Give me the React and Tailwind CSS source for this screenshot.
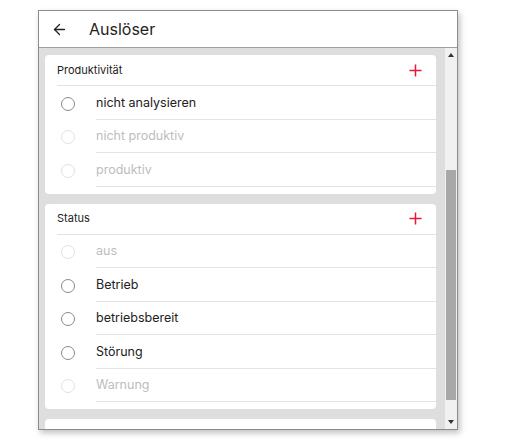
import { ArrowLeft } from "lucide-react";

const groups = [
    {
        title: "Produktivität",
        items: [
            { label: "nicht analysieren", enabled: true },
            { label: "nicht produktiv", enabled: false },
            { label: "produktiv", enabled: false },
        ],
    },
    {
        title: "Status",
        items: [
            { label: "aus", enabled: false },
            { label: "Betrieb", enabled: true },
            { label: "betriebsbereit", enabled: true },
            { label: "Störung", enabled: true },
            { label: "Warnung", enabled: false },
        ],
    },
];

function PlusIcon() {
    return (
        <svg width="13" height="13" viewBox="0 0 13 13" className="shrink-0">
            <path d="M6.5 0.5v12M0.5 6.5h12" stroke="#e8173a" strokeWidth="1.5" fill="none" />
        </svg>
    );
}

function Row({ label, enabled }) {
    return (
        <div className="flex h-[33.5px] items-center">
            <div className="flex w-[51px] shrink-0 justify-center pr-[6px] pt-[2px]">
                <span
                    className={
                        "block h-[14px] w-[14px] rounded-full border " +
                        (enabled ? "border-[#8a8a8a]" : "border-[#e2e2e2]")
                    }
                />
            </div>
            <div className="flex h-full flex-1 items-center border-b border-[#e3e3e3] pt-[2px]">
                <span className={"text-[12.5px] " + (enabled ? "text-[#222]" : "text-[#bdbdbd]")}>
                    {label}
                </span>
            </div>
        </div>
    );
}

function Group({ title, items }) {
    return (
        <div className="rounded-[4px] bg-white pb-[7px]">
            <div className="ml-[12px] flex h-[31px] items-center justify-between border-b border-[#e3e3e3] pr-[14px]">
                <span className="text-[11px] text-[#222]">{title}</span>
                <PlusIcon />
            </div>
            {items.map((item) => (
                <Row key={item.label} {...item} />
            ))}
        </div>
    );
}

export default function App() {
    return (
        <div
            className="h-[445px] w-[510px] bg-white pl-[38px] pt-[10px]"
            style={{ fontFamily: "Inter, 'Noto Sans', sans-serif" }}
        >
            <div className="flex h-[420px] w-[420px] flex-col overflow-hidden border border-[#8c8c8c] shadow-[2px_3px_6px_rgba(0,0,0,0.25)]">
                {/* Header */}
                <div className="flex h-[37px] shrink-0 items-center border-b border-[#a0a0a0] bg-white">
                    <ArrowLeft size={17} strokeWidth={1.8} className="ml-[12px] text-[#222]" />
                    <span className="ml-[21px] text-[16px] text-[#222]">Auslöser</span>
                </div>

                {/* Body */}
                <div className="flex min-h-0 flex-1 bg-[#dedede]">
                    <div className="flex flex-1 flex-col gap-[10px] overflow-hidden pl-[6px] pr-[9px] pt-[7px]">
                        {groups.map((g) => (
                            <Group key={g.title} {...g} />
                        ))}
                        <div className="h-[30px] shrink-0 rounded-[4px] bg-white" />
                    </div>

                    {/* Scrollbar */}
                    <div className="relative flex w-[12px] shrink-0 flex-col items-center bg-[#f1f1f1]">
                        <div className="flex h-[14px] items-center justify-center">
                            <div className="h-0 w-0 border-x-[3.5px] border-b-[4px] border-x-transparent border-b-[#333]" />
                        </div>
                        <div className="mt-[108px] h-[230px] w-[10px] bg-[#a8a8a8]" />
                        <div className="flex-1" />
                        <div className="flex h-[14px] items-center justify-center">
                            <div className="h-0 w-0 border-x-[3.5px] border-t-[4px] border-x-transparent border-t-[#333]" />
                        </div>
                    </div>
                </div>
            </div>
        </div>
    );
}
